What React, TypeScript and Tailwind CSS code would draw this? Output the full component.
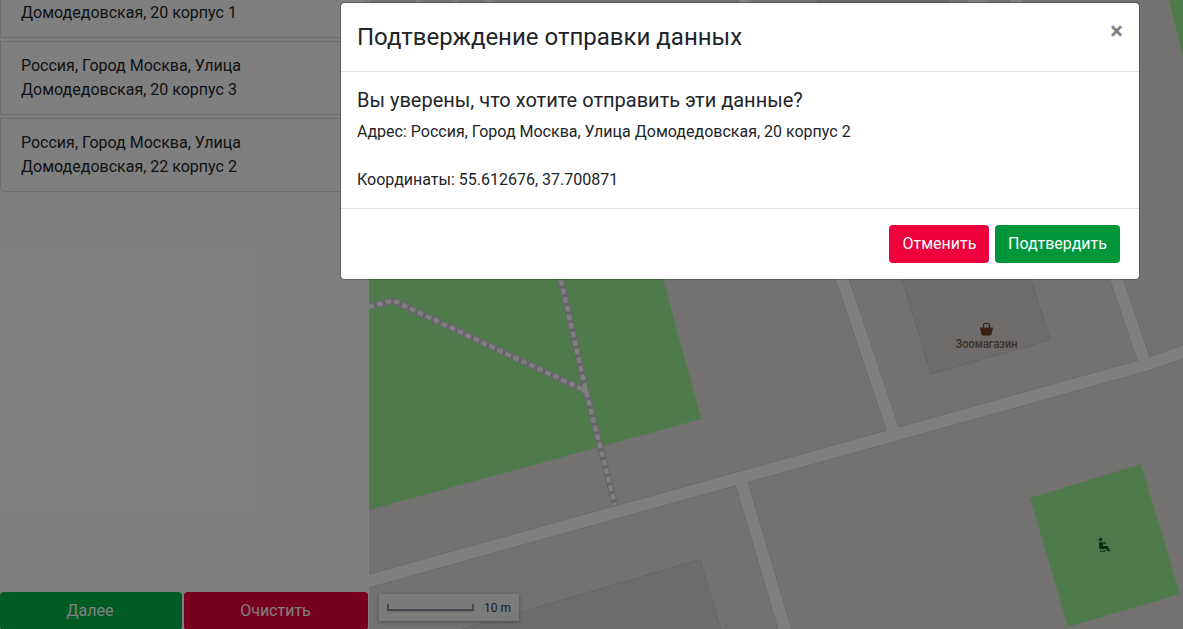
import type { ReactNode } from "react";

const addresses = [
  ["Россия, Город Москва, Улица", "Домодедовская, 20 корпус 3"],
  ["Россия, Город Москва, Улица", "Домодедовская, 22 корпус 2"],
];

function Button({ children, className }: { children: ReactNode; className: string }) {
  return (
    <button type="button" className={`h-[38px] rounded text-center text-base leading-6 text-white ${className}`}>
      {children}
    </button>
  );
}

const roads = [
  "M360 583.500 L1147 364.600 L1200 345.700",
  "M832 252 L842 279 L851 305 L895 436",
  "M1110 260 L1146 366",
  "M741 481 L788 640",
  "M743 -6 L747 8",
  "M1014 -6 L1019 8",
];

const footpaths = "M360 309 L393 300.500 L586 391 M557 263 L567 307 L586 391 L615 505";

function MapCanvas() {
  return (
    <svg className="block h-full w-full" viewBox="369 0 814 629" preserveAspectRatio="none">
      <rect x="369" width="814" height="629" fill="#e8e4e1" />
      <path d="M369 100 H614.500 L663 279 L701.300 419 L369 510 Z" fill="#9ef698" />
      <path d="M1168.500 -1 H1184 V60 Z" fill="#9ef698" />
      <path d="M1030 498 L1141 464 L1180 594 L1068 627 Z" fill="#9ef698" />
      <path d="M818 0 L902 279 L931 374 L1050 340 L1031 279 L948 0 Z" fill="#dbd8d5" stroke="#cdcac7" />
      <path d="M460 630 L700 559.500 L721 630 Z" fill="#dbd8d5" stroke="#cdcac7" />
      <g fill="none" stroke="#d6d6e2" strokeWidth="14">
        {roads.map((d) => <path key={d} d={d} />)}
      </g>
      <g fill="none" stroke="#ffffff" strokeWidth="12">
        {roads.map((d) => <path key={d} d={d} />)}
      </g>
      <path d="M416 4 L420 -1 M453 0 L458 3 M484 -1 L495 5 M968 3 L976 0 L986 3" fill="none" stroke="#f8f8fa" strokeWidth="4" />
      <path d={footpaths} fill="none" stroke="#cbcbd2" strokeWidth="6.500" strokeLinejoin="round" />
      <path d={footpaths} fill="none" stroke="#ffffff" strokeWidth="4.400" strokeDasharray="5.600 3.200" />
      <circle cx="585" cy="390.500" r="3" fill="#ffffff" />
      <g fill="#703f25">
        <path d="M980 327.500 H993 L991.500 334.500 Q991 335.500 990 335.500 H983 Q982 335.500 981.500 334.500 Z" />
        <path d="M983.500 328 V325 Q983.500 323.500 985 323.500 H988 Q989.500 323.500 989.500 325 V328" fill="none" stroke="#703f25" strokeWidth="1.200" />
      </g>
      <text x="955.500" y="348" textLength="62" lengthAdjust="spacingAndGlyphs" fontFamily="Roboto, sans-serif" fontSize="12" fontWeight="500" fill="#7a6252">Зоомагазин</text>
      <g fill="#006b0b" stroke="#b3ddb0" strokeWidth="1.800" paintOrder="stroke" strokeLinejoin="round">
        <circle cx="1100.500" cy="539.500" r="1.700" />
        <path d="M1099 542.300 H1106 V543.500 H1103 V546 H1107.500 L1110.500 551.300 H1108 L1105.700 549 H1101 Q1099 549 1099 547 Z" />
        <path d="M1100 551 L1106 550.100 V551.200 L1100 552.100 Z" />
      </g>
    </svg>
  );
}

export default function App() {
  return (
    <div className="relative h-[629px] w-full overflow-hidden bg-white font-['Roboto',sans-serif] text-[#212529]">
      <div className="flex h-full">
        <aside className="flex w-[369px] shrink-0 flex-col">
          <div className="flex flex-col gap-[3px]">
            <div className="h-[38px] w-[367px] border border-t-0 border-black/[0.125] px-5 pt-px text-base leading-6">
              Домодедовская, 20 корпус 1
            </div>
            {addresses.map(([street, house]) => (
              <div key={house} className="h-[74px] w-[367px] border border-black/[0.125] px-5 py-3 text-base leading-6 last:rounded-b">
                <div>{street}</div>
                <div>{house}</div>
              </div>
            ))}
          </div>
          <div className="mt-auto -mb-px flex gap-0.5 pr-px">
            <Button className="w-[182px] bg-[#00b945] pr-0.5">Далее</Button>
            <Button className="w-[184px] bg-[#ed003c] pr-px">Очистить</Button>
          </div>
        </aside>
        <main className="relative min-w-0 flex-1">
          <MapCanvas />
          <div className="absolute bottom-2 left-[10px] flex h-[27px] w-[140px] items-center bg-white/70 pl-2 text-xs text-[#333] shadow-[0_1px_4px_rgba(0,0,0,0.3)]">
            <div className="h-[7px] w-[87px] border-2 border-t-0 border-[#89899b] shadow-sm" />
            <span className="ml-[10px]">10 m</span>
          </div>
        </main>
      </div>

      <div className="absolute inset-0 bg-black/50">
        <section role="dialog" aria-modal="true" className="mt-0.5 ml-[340px] flex h-[278px] w-[800px] flex-col rounded-[4.8px] border border-black/20 bg-white bg-clip-padding">
          <header className="flex h-[69px] items-start justify-between border-b border-[#dee2e6] p-4">
            <h2 className="text-2xl leading-9">Подтверждение отправки данных</h2>
            <button type="button" aria-label="Закрыть" className="text-2xl leading-6 font-bold text-black/50">×</button>
          </header>
          <div className="h-[137px] border-b border-[#dee2e6] p-4">
            <h3 className="mb-2 text-xl leading-6">Вы уверены, что хотите отправить эти данные?</h3>
            <p className="text-base leading-6">Адрес: Россия, Город Москва, Улица Домодедовская, 20 корпус 2</p>
            <p className="mt-6 text-base leading-6">Координаты: 55.612676, 37.700871</p>
          </div>
          <footer className="flex justify-end gap-1.5 py-4 pr-[19px]">
            <Button className="w-[100px] bg-[#ed003c] pl-px">Отменить</Button>
            <Button className="w-[125px] bg-[#009639]">Подтвердить</Button>
          </footer>
        </section>
      </div>
    </div>
  );
}
